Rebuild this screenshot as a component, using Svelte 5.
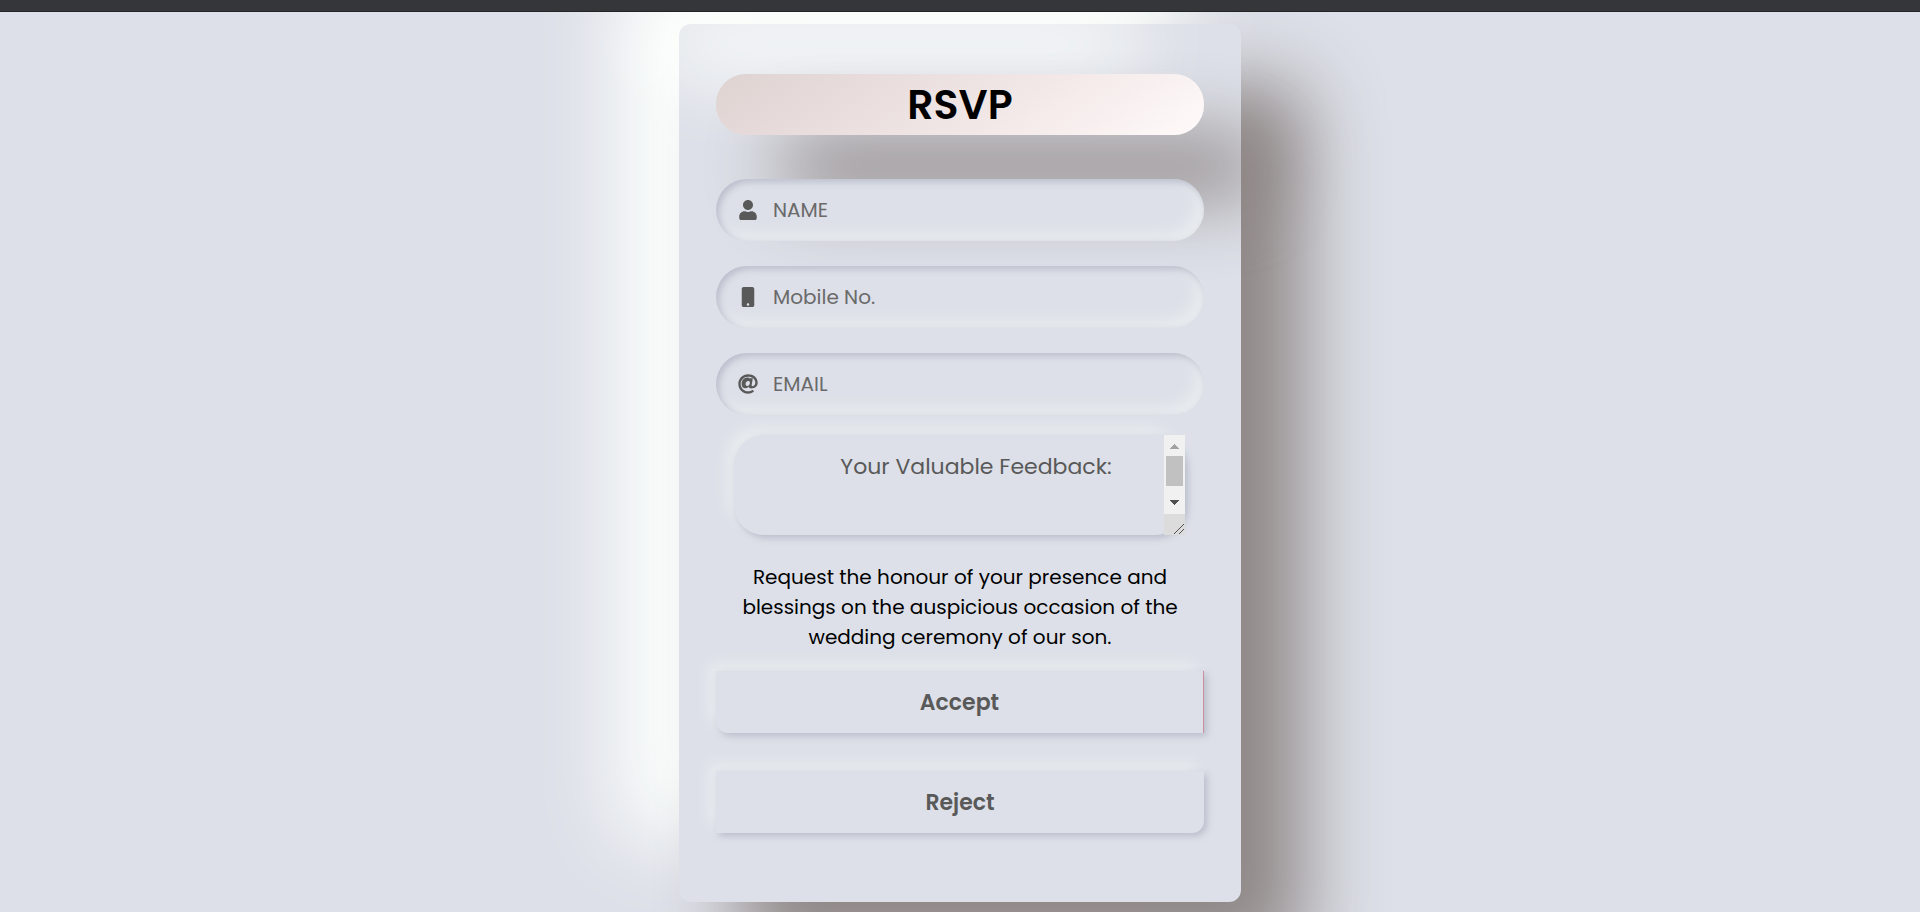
<script>
  const userIcon = {
    box: '0 0 448 512',
    path: 'M224 256c70.7 0 128-57.3 128-128S294.7 0 224 0 96 57.3 96 128s57.3 128 128 128zm89.6 32h-16.7c-22.2 10.2-46.9 16-72.9 16s-50.6-5.8-72.9-16h-16.7C60.2 288 0 348.2 0 422.4V464c0 26.5 21.5 48 48 48h352c26.5 0 48-21.5 48-48v-41.6c0-74.2-60.2-134.4-134.4-134.4z'
  };
  const mobileIcon = {
    box: '0 0 320 512',
    path: 'M272 0H48C21.5 0 0 21.5 0 48v416c0 26.5 21.5 48 48 48h224c26.5 0 48-21.5 48-48V48c0-26.5-21.5-48-48-48zM160 480c-17.7 0-32-14.3-32-32s14.3-32 32-32 32 14.3 32 32-14.3 32-32 32z'
  };
  const atIcon = {
    box: '0 0 512 512',
    path: 'M256 8C118.941 8 8 118.919 8 256c0 137.058 110.919 248 248 248 52.925 0 104.68-17.078 147.092-48.319 5.501-4.052 6.423-11.924 2.095-17.211l-20-25c-4.055-4.954-11.249-5.803-16.428-2.041C337 432 298.238 443 256 443c-103 0-187-84-187-187S153 69 256 69c102 0 187 58 187 158 0 52-31 84-67 84-28 0-30-17-23-46l26-142c2-7-4-14-12-14h-50c-6 0-11 4-12 10-15-21-37-27-58-27-88 0-155 71-155 163 0 66 38 112 96 112 32 0 63-15 84-39 6 29 32 43 67 43C445 371 504 311 504 227 504 94 396 8 256 8zm-18 296c-28 0-44-18-44-48 0-45 31-79 67-79 28 0 44 17 44 46 0 47-32 81-67 81z'
  };

  const fields = [
    { name: 'name', type: 'text', text: 'NAME', icon: userIcon },
    { name: 'mobile', type: 'tel', text: 'Mobile No.', icon: mobileIcon },
    { name: 'email', type: 'email', text: 'EMAIL', icon: atIcon }
  ];
</script>

<div class="topbar"></div>
<main>
  <form class="card" onsubmit={(e) => e.preventDefault()}>
    <h1>RSVP</h1>

    <div class="fields">
      {#each fields as field}
        <label class="field">
          <svg viewBox={field.icon.box} aria-hidden="true"><path d={field.icon.path} /></svg>
          <input type={field.type} name={field.name} placeholder={field.text} aria-label={field.text} />
        </label>
      {/each}
    </div>

    <div class="feedback">
      <textarea name="feedback" placeholder="Your Valuable Feedback:" aria-label="Your Valuable Feedback:"></textarea>
      <svg class="scrollbar" viewBox="0 0 21 100" shape-rendering="crispEdges" aria-hidden="true">
        <rect width="21" height="79" fill="#f1f1f1" />
        <path d="M6 14h9l-4-5h-1z" fill="#a3a3a3" />
        <rect x="2" y="21" width="17" height="30" fill="#c1c1c1" />
        <path d="M6 65h9l-4 5h-1z" fill="#505050" />
        <rect y="79" width="21" height="21" fill="#dcdcdc" />
        <path d="M10 99l10-10M15 99l5-5" stroke="#505050" fill="none" />
      </svg>
    </div>

    <p>
      Request the honour of your presence and blessings on the auspicious occasion of the wedding
      ceremony of our son.
    </p>

    <div class="actions">
      <button type="submit" class="accept">Accept</button>
      <button type="button" class="reject">Reject</button>
    </div>
  </form>
</main>

<style>
  :global(body) {
    background: #dde0e8;
    font-family: Poppins, Inter, 'Open Sans', sans-serif;
  }

  .topbar {
    box-sizing: border-box;
    height: 12px;
    background: #35363a;
    border-bottom: 1px solid #222326;
  }

  main {
    display: flex;
    justify-content: center;
    padding: 12px 12px 10px;
    overflow: hidden;
  }

  .card {
    box-sizing: border-box;
    display: flex;
    flex-direction: column;
    width: 100%;
    max-width: 562px;
    padding: 50px 37px 69px;
    border-radius: 12px;
    background: #dde0e8;
    box-shadow:
      62px 62px 80px #8e8685,
      -62px -62px 84px #fdfffd;
  }

  h1 {
    margin: 0 0 44px;
    border-radius: 30px;
    background: linear-gradient(145deg, #dfd3d2, #f2e8e7 60%, #fffafa);
    box-shadow:
      62px 62px 76px #8e8685,
      -62px -62px 80px #fdfffd;
    color: #000;
    font-size: 41px;
    font-weight: 600;
    line-height: 61px;
    text-align: center;
  }

  .fields {
    display: flex;
    flex-direction: column;
    gap: 25px;
  }

  .field {
    display: flex;
    align-items: center;
    gap: 14px;
    height: 62px;
    padding: 0 21px;
    border-radius: 31px;
    background: #dde0e8;
    box-shadow:
      inset 3px 3px 7px #babecc,
      inset -8px -8px 15px rgba(250, 255, 250, 0.4);
  }

  .field svg {
    flex: none;
    width: 22px;
    height: 20px;
    fill: #595959;
  }

  .field input {
    flex: 1;
    min-width: 0;
    padding: 0;
    border: 0;
    outline: 0;
    background: transparent;
    color: #595959;
    font: inherit;
    font-size: 20px;
  }

  .field input::placeholder {
    color: #6a6a6a;
    opacity: 1;
  }

  .feedback {
    position: relative;
    display: flex;
    margin: 20px 19px 27px 18px;
  }

  textarea {
    box-sizing: border-box;
    width: 100%;
    height: 100px;
    padding: 15px 21px 15px 54px;
    border: 0;
    border-radius: 30px;
    outline: 0;
    overflow: hidden;
    resize: none;
    background: #dde0e8;
    box-shadow:
      3px 3px 7px #babecc,
      -8px -8px 15px rgba(250, 255, 250, 0.4);
    color: #595959;
    font: inherit;
    font-size: 22px;
    line-height: 34px;
    text-align: center;
  }

  textarea::placeholder {
    color: #595959;
    opacity: 1;
  }

  .scrollbar {
    position: absolute;
    top: 0;
    right: 0;
    width: 21px;
    height: 100px;
  }

  p {
    margin: 0 19px 19px;
    color: #000;
    font-size: 20px;
    font-weight: 400;
    line-height: 30px;
    text-align: center;
  }

  .actions {
    display: flex;
    flex-direction: column;
    gap: 38px;
  }

  button {
    height: 62px;
    padding: 0;
    border: 0;
    background: #dde0e8;
    box-shadow:
      3px 3px 7px #babecc,
      -8px -8px 15px rgba(250, 255, 250, 0.4);
    color: #595959;
    font: inherit;
    font-size: 22px;
    font-weight: 600;
    cursor: pointer;
  }

  .accept {
    border-right: 1px solid #c98f9c;
    border-radius: 0 0 0 12px;
  }

  .reject {
    border-radius: 0 0 12px 0;
  }
</style>
